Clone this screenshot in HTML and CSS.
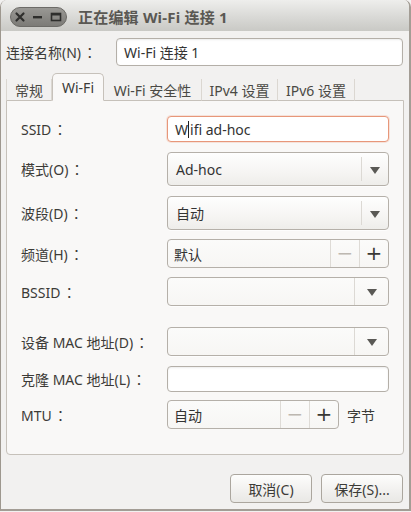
FILE: index.html
```html
<!DOCTYPE html>
<html lang="zh">
<head>
<meta charset="utf-8">
<link rel="stylesheet" href="styles.css">
</head>
<body>
<div class="window">
  <div class="titlebar">
    <div class="wm-buttons">
      <svg width="57" height="20" viewBox="0 0 57 20">
        <defs>
          <linearGradient id="pill" x1="0" y1="0" x2="0" y2="1">
            <stop offset="0" stop-color="#9a9995"/>
            <stop offset="1" stop-color="#7b7a76"/>
          </linearGradient>
        </defs>
        <rect x="0.5" y="0.5" width="56" height="19" rx="9.5" fill="url(#pill)" stroke="#6c6b67"/>
        <path d="M6.5 6.5 L13.5 13.5 M13.5 6.5 L6.5 13.5" stroke="#2e2e2c" stroke-width="2.2" stroke-linecap="round"/>
        <rect x="23" y="9" width="9" height="2.4" fill="#2e2e2c"/>
        <rect x="41.5" y="6.5" width="9" height="7" fill="none" stroke="#2e2e2c" stroke-width="1.6"/>
        <rect x="41.5" y="6.5" width="9" height="2" fill="#2e2e2c"/>
      </svg>
    </div>
    <div class="title">正在编辑 Wi-Fi 连接 1</div>
  </div>

  <div class="content">
    <div class="name-row">
      <span class="name-label">连接名称(N)<span class="colon">：</span></span>
      <div class="entry name-entry">Wi-Fi 连接 1</div>
    </div>

    <div class="tabs">
      <div class="tab t1">常规</div>
      <div class="tab active t2">Wi-Fi</div>
      <div class="tab t3">Wi-Fi 安全性</div>
      <div class="tab t4">IPv4 设置</div>
      <div class="tab t5">IPv6 设置</div>
    </div>

    <div class="panel">
      <div class="row r-ssid">
        <span class="label">SSID<span class="colon">：</span></span>
        <div class="entry focus">W<span class="caret"></span>ifi ad-hoc</div>
      </div>
      <div class="row r-mode">
        <span class="label">模式(O)<span class="colon">：</span></span>
        <div class="combo tall"><span class="combo-text">Ad-hoc</span><span class="combo-btn"><span class="arrow"></span></span></div>
      </div>
      <div class="row r-band">
        <span class="label">波段(D)<span class="colon">：</span></span>
        <div class="combo tall"><span class="combo-text">自动</span><span class="combo-btn"><span class="arrow"></span></span></div>
      </div>
      <div class="row r-chan">
        <span class="label">频道(H)<span class="colon">：</span></span>
        <div class="spin"><span class="spin-text">默认</span><span class="spin-btn minus">−</span><span class="spin-btn plus">+</span></div>
      </div>
      <div class="row r-bssid">
        <span class="label">BSSID<span class="colon">：</span></span>
        <div class="combo entry-combo"><span class="combo-text"></span><span class="combo-btn wide"><span class="arrow"></span></span></div>
      </div>
      <div class="row r-mac">
        <span class="label">设备 MAC 地址(D)<span class="colon">：</span></span>
        <div class="combo entry-combo"><span class="combo-text"></span><span class="combo-btn wide"><span class="arrow"></span></span></div>
      </div>
      <div class="row r-clone">
        <span class="label">克隆 MAC 地址(L)<span class="colon">：</span></span>
        <div class="entry"></div>
      </div>
      <div class="row r-mtu">
        <span class="label">MTU<span class="colon">：</span></span>
        <div class="spin short"><span class="spin-text">自动</span><span class="spin-btn minus">−</span><span class="spin-btn plus">+</span></div>
        <span class="unit">字节</span>
      </div>
    </div>

    <div class="actions">
      <button class="btn">取消(C)</button>
      <button class="btn">保存(S)...</button>
    </div>
  </div>
</div>
</body>
</html>
```

FILE: styles.css
```css
* { box-sizing: border-box; }
html, body {
  margin: 0;
  padding: 0;
  background: #f2f1f0;
}
body {
  font-family: "Noto Sans", "Noto Sans CJK SC", sans-serif;
  font-size: 14px;
  color: #3c3b37;
}
.colon {
  font-family: "Noto Sans CJK TC", "Noto Sans CJK SC", sans-serif;
  display: inline-block;
  width: 1.1em;
  text-align: center;
  margin-left: 1px;
}
.window {
  width: 411px;
  height: 511px;
  background: #f2f1f0;
  border-left: 1px solid #9e988f;
  border-right: 2px solid #a39d95;
  border-bottom: 2px solid #a39d95;
  border-radius: 7px 7px 0 0;
  overflow: hidden;
  display: flex;
  flex-direction: column;
}
.titlebar {
  height: 31px;
  flex: none;
  background: linear-gradient(#eeeeec, #d9d9d6 55%, #c9c9c5);
  display: flex;
  align-items: center;
  padding-left: 9px;
}
.wm-buttons {
  display: flex;
  height: 20px;
  margin-top: 2px;
}
.title {
  margin-left: 11px;
  font-weight: bold;
  font-size: 15px;
  letter-spacing: 0.2px;
  color: #5a5853;
  margin-top: 1px;
}
.content {
  flex: 1;
  padding: 7px 6px 0 5px;
  display: flex;
  flex-direction: column;
}
.name-row {
  display: flex;
  align-items: center;
  height: 28px;
}
.name-label {
  width: 110px;
  white-space: nowrap;
}
.entry {
  height: 26px;
  flex: 1;
  background: #fff;
  border: 1px solid #b4afa8;
  border-radius: 4px;
  box-shadow: inset 0 1px 2px rgba(0,0,0,0.08);
  display: flex;
  align-items: center;
  padding-left: 6px;
  color: #333;
  font-size: 14px;
}
.name-entry {
  height: 28px;
  padding-left: 7px;
}
.tabs {
  margin-top: 8px;
  display: flex;
  align-items: flex-end;
  height: 27px;
  position: relative;
  z-index: 1;
  margin-bottom: -1px;
}
.tab {
  height: 22px;
  display: flex;
  align-items: center;
  justify-content: center;
  border-right: 1px solid #dbd7d1;
  font-size: 14px;
  color: #4a4944;
  background: #f2f1f0;
  border-bottom: 1px solid #c6c1ba;
}
.t1 { width: 46px; border-left: 1px solid #dbd7d1; }
.t2 { width: 52px; }
.t3 { width: 98px; }
.t4 { width: 76px; }
.t5 { width: 77px; }
.tab.active {
  height: 28px;
  background: #f9f8f7;
  border: 1px solid #c6c1ba;
  border-bottom: 1px solid #f9f8f7;
  border-radius: 5px 5px 0 0;
  color: #3c3b37;
  padding-top: 1px;
}
.panel {
  height: 355px;
  background: #f9f8f7;
  border: 1px solid #c6c1ba;
  border-radius: 0 0 4px 4px;
  padding: 15px 14px 0 14px;
  display: flex;
  flex-direction: column;
  width: 398px;
}
.row {
  display: flex;
  align-items: center;
}
.label {
  width: 146px;
  flex: none;
  white-space: nowrap;
}
.r-ssid { height: 26px; }
.r-mode { height: 34px; margin-top: 10px; }
.r-band { height: 34px; margin-top: 10px; }
.r-chan { height: 29px; margin-top: 9px; }
.r-bssid { height: 29px; margin-top: 9px; }
.r-mac { height: 29px; margin-top: 21px; }
.r-clone { height: 26px; margin-top: 10px; }
.r-mtu { height: 29px; margin-top: 8px; }
.row > .entry, .row > .combo, .row > .spin { width: 222px; flex: none; }
.entry.focus {
  border-color: #e7977a;
  box-shadow: 0 0 0 1px rgba(240, 160, 130, 0.25);
  padding-left: 7px;
}
.caret {
  display: inline-block;
  width: 1px;
  height: 17px;
  background: #222;
  margin: 0 1px 0 0;
}
.combo {
  height: 100%;
  display: flex;
  align-items: stretch;
  background: linear-gradient(#fefefe, #f6f5f3 60%, #eeedea);
  border: 1px solid #b5b0a9;
  border-radius: 4px;
  box-shadow: 0 1px 0 rgba(255,255,255,0.7);
}
.combo.entry-combo {
  background: linear-gradient(#fbfbfa, #f7f6f4);
}
.combo-text {
  flex: 1;
  display: flex;
  align-items: center;
  padding-left: 8px;
  font-size: 14px;
  color: #333;
}
.combo-btn {
  width: 27px;
  flex: none;
  display: flex;
  align-items: center;
  justify-content: center;
  border-left: 1px solid #dcd9d4;
  margin: 4px 0;
}
.combo-btn.wide {
  width: 34px;
  margin: 0;
  padding-left: 1px;
}
.arrow {
  width: 0;
  height: 0;
  border-left: 5px solid transparent;
  border-right: 5px solid transparent;
  border-top: 7px solid #5a5955;
  margin-top: 2px;
}
.spin {
  height: 100%;
  display: flex;
  align-items: stretch;
  background: linear-gradient(#fbfbfa, #f7f6f4);
  border: 1px solid #b5b0a9;
  border-radius: 4px;
}
.spin.short { width: 172px !important; }
.spin-text {
  flex: 1;
  display: flex;
  align-items: center;
  padding-left: 6px;
  font-size: 14px;
  color: #333;
}
.spin-btn {
  width: 29px;
  flex: none;
  display: flex;
  align-items: center;
  justify-content: center;
  border-left: 1px solid #dedbd6;
  font-size: 20px;
  line-height: 1;
  font-family: "DejaVu Sans", sans-serif;
  padding-bottom: 2px;
}
.spin-btn.minus { color: #bdb8b1; }
.spin-btn.plus { color: #3a3936; }
.unit {
  margin-left: 8px;
  font-size: 14px;
}
.actions {
  display: flex;
  justify-content: flex-end;
  gap: 9px;
  margin-top: 19px;
  padding-right: 0;
}
.btn {
  width: 82px;
  height: 29px;
  font-family: "Noto Sans", "Noto Sans CJK SC", sans-serif;
  font-size: 14px;
  color: #3c3b37;
  background: linear-gradient(#fdfdfc, #f1f0ee 60%, #e9e8e5);
  border: 1px solid #aba69e;
  border-radius: 4px;
  padding: 0;
}
```
